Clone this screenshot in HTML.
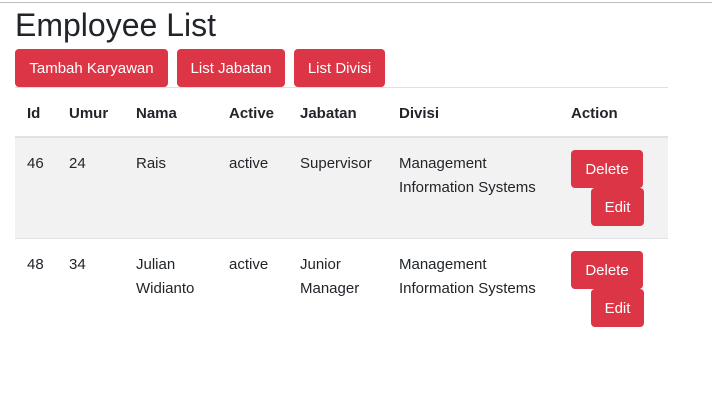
<!DOCTYPE html>
<html><head><style>
body{margin:0;width:712px;height:404px;background:#fff;font-family:"Liberation Sans",sans-serif;color:#212529;position:relative;overflow:hidden}
.topline{position:absolute;left:0;top:2px;width:712px;height:1px;background:#bdbdbd}
h1{position:absolute;left:15px;top:5px;margin:0;font-size:32px;font-weight:500;line-height:40px}
.btn{position:absolute;background:#dc3545;color:#fff;border-radius:4px;font-size:15px;text-align:center;line-height:40px;height:38px}
.t{position:absolute;font-size:15px;line-height:24px}
.b{font-weight:bold}
.line{position:absolute;left:15px;width:653px;background:#dee2e6}
</style></head><body>
<div class="topline"></div>
<h1>Employee List</h1>
<div class="btn" style="left:15px;top:49px;width:153px">Tambah Karyawan</div>
<div class="btn" style="left:177px;top:49px;width:108px">List Jabatan</div>
<div class="btn" style="left:294px;top:49px;width:91px">List Divisi</div>
<div class="line" style="top:87px;height:1px"></div>
<div class="t b" style="left:27px;top:102px">Id</div>
<div class="t b" style="left:69px;top:102px">Umur</div>
<div class="t b" style="left:136px;top:102px">Nama</div>
<div class="t b" style="left:229px;top:102px">Active</div>
<div class="t b" style="left:300px;top:102px">Jabatan</div>
<div class="t b" style="left:399px;top:102px">Divisi</div>
<div class="t b" style="left:571px;top:102px">Action</div>
<div class="line" style="top:136px;height:2px"></div>
<div style="position:absolute;left:15px;top:138px;width:653px;height:100px;background:#f2f2f2"></div>
<div class="line" style="top:238px;height:1px"></div>
<div class="t" style="left:27px;top:152px">46</div>
<div class="t" style="left:69px;top:152px">24</div>
<div class="t" style="left:136px;top:152px">Rais</div>
<div class="t" style="left:229px;top:152px">active</div>
<div class="t" style="left:300px;top:152px">Supervisor</div>
<div class="t" style="left:399px;top:152px">Management<br>Information Systems</div>
<div class="btn" style="left:571px;top:150px;width:72px">Delete</div>
<div class="btn" style="left:591px;top:188px;width:53px">Edit</div>
<div class="t" style="left:27px;top:253px">48</div>
<div class="t" style="left:69px;top:253px">34</div>
<div class="t" style="left:136px;top:253px">Julian<br>Widianto</div>
<div class="t" style="left:229px;top:253px">active</div>
<div class="t" style="left:300px;top:253px">Junior<br>Manager</div>
<div class="t" style="left:399px;top:253px">Management<br>Information Systems</div>
<div class="btn" style="left:571px;top:251px;width:72px">Delete</div>
<div class="btn" style="left:591px;top:289px;width:53px">Edit</div>
</body></html>
